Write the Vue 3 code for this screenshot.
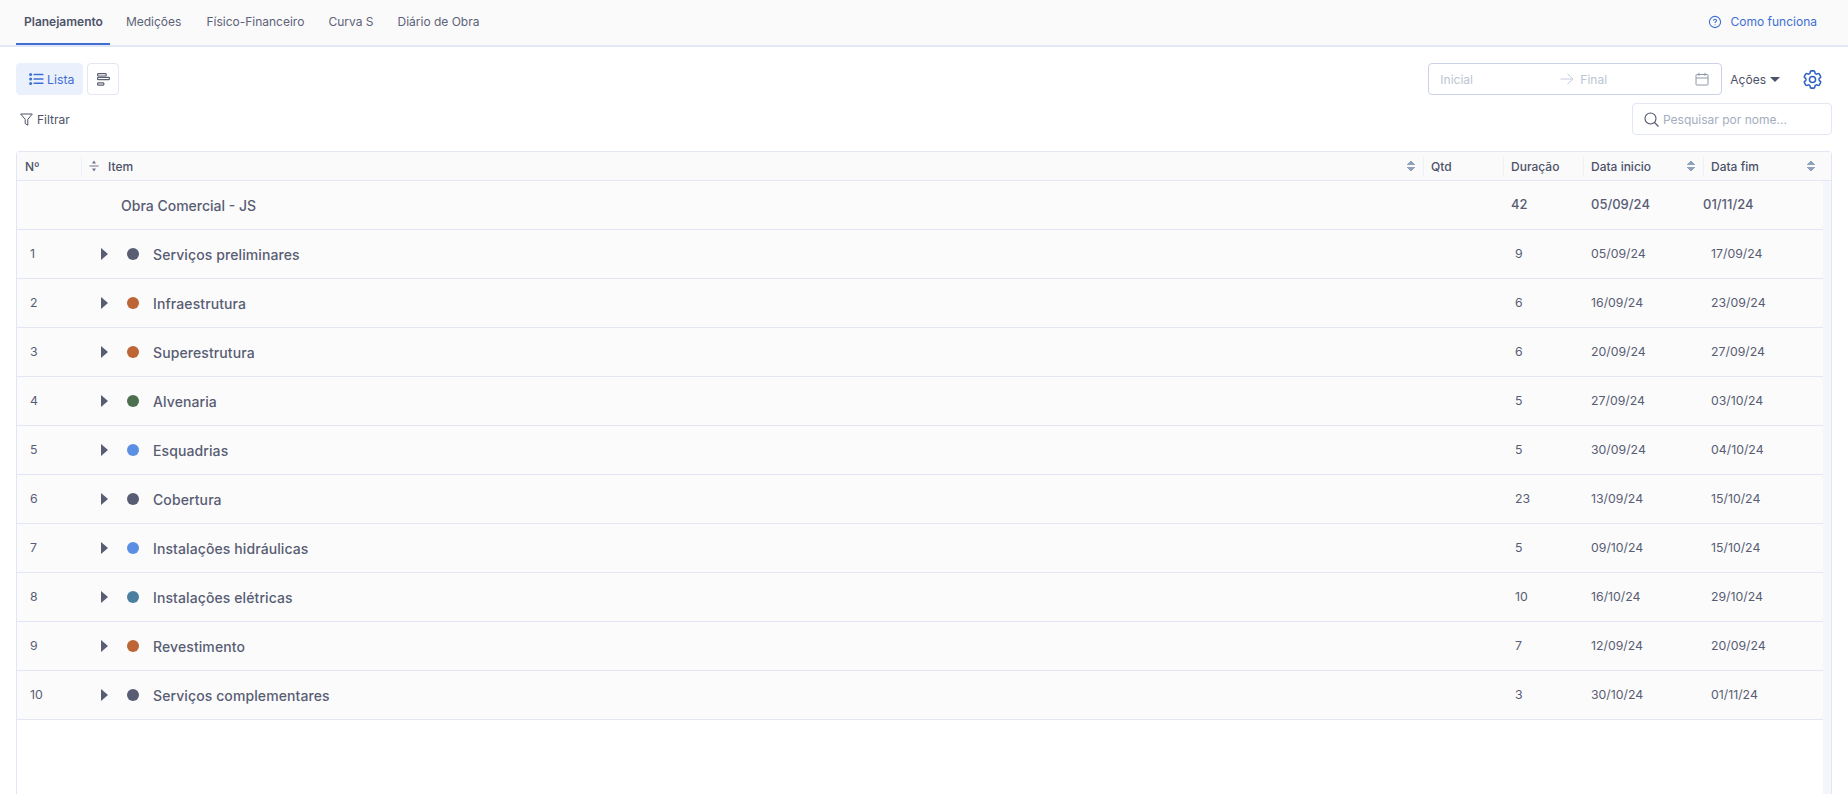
<template>
  <div class="page">
    <header class="topbar">
      <nav class="tabs">
        <a v-for="(tab, i) in tabs" :key="tab" :class="['tab', i === 0 ? 'active' : '']">{{ tab }}</a>
      </nav>
      <a class="help">
        <svg width="14" height="14" viewBox="0 0 14 14" fill="none" stroke="#3f6fd1" stroke-width="1.1">
          <circle cx="7" cy="7" r="5.6" />
          <path d="M5.5 5.7c0-.9.7-1.4 1.5-1.4s1.5.6 1.5 1.3c0 1.2-1.5 1.2-1.5 2.4" />
          <path d="M7 9.4v.8" />
        </svg>
        Como funciona
      </a>
    </header>

    <section class="toolbar">
      <div class="views">
        <button class="view on">
          <svg width="15" height="12" viewBox="0 0 15 12" fill="#3f6fd1">
            <circle cx="1.6" cy="1.6" r="1.5" />
            <circle cx="1.6" cy="6" r="1.5" />
            <circle cx="1.6" cy="10.4" r="1.5" />
            <rect x="4.5" y="0.8" width="10" height="1.5" rx=".5" />
            <rect x="4.5" y="5.2" width="10" height="1.5" rx=".5" />
            <rect x="4.5" y="9.6" width="10" height="1.5" rx=".5" />
          </svg>
          Lista
        </button>
        <button class="view">
          <svg width="13" height="13" viewBox="0 0 13 13" fill="none" stroke="#5a5f73" stroke-width="1.2">
            <rect x=".6" y=".6" width="8.6" height="2.4" rx=".8" />
            <rect x=".6" y="4.3" width="11.8" height="2.4" rx=".8" />
            <rect x=".6" y="9.8" width="6.2" height="2.4" rx=".8" />
          </svg>
        </button>
      </div>
      <div class="actions">
        <div class="range">
          <span class="ph start">Inicial</span>
          <svg width="14" height="12" viewBox="0 0 14 12" fill="none" stroke="#c5cbdb" stroke-width="1">
            <path d="M.5 6h12.5M7.5.8 13 6l-5.500 5.200" />
          </svg>
          <span class="ph end">Final</span>
          <svg width="14" height="14" viewBox="0 0 14 14" fill="none" stroke="#8f96a8" stroke-width="1">
            <rect x="1" y="2.500" width="12" height="10.500" rx=".8" />
            <path d="M1 6h12M4 .8v3M10 .8v3" />
          </svg>
        </div>
        <button class="menu">Ações <i class="caret"></i></button>
        <svg class="gear" width="23" height="23" viewBox="0 0 24 24" fill="none" stroke="#2f62c4" stroke-width="1.6" stroke-linejoin="round">
          <path d="M9.594 3.94c.09-.542.56-.94 1.11-.94h2.593c.55 0 1.02.398 1.11.94l.213 1.281c.063.374.313.686.645.87.074.04.147.083.22.127.325.196.72.257 1.075.124l1.217-.456a1.125 1.125 0 0 1 1.37.49l1.296 2.247a1.125 1.125 0 0 1-.26 1.431l-1.003.827c-.293.241-.438.613-.43.992a7.723 7.723 0 0 1 0 .255c-.008.378.137.75.43.991l1.004.827c.424.35.534.955.26 1.43l-1.298 2.247a1.125 1.125 0 0 1-1.369.491l-1.217-.456c-.355-.133-.75-.072-1.076.124a6.47 6.47 0 0 1-.22.128c-.331.183-.581.495-.644.869l-.213 1.281c-.09.543-.56.94-1.11.94h-2.594c-.55 0-1.019-.398-1.11-.94l-.213-1.281c-.062-.374-.312-.686-.644-.87a6.52 6.52 0 0 1-.22-.127c-.325-.196-.72-.257-1.076-.124l-1.217.456a1.125 1.125 0 0 1-1.369-.49l-1.297-2.247a1.125 1.125 0 0 1 .26-1.431l1.004-.827c.292-.24.437-.613.43-.991a6.932 6.932 0 0 1 0-.255c.007-.38-.138-.751-.43-.992l-1.004-.827a1.125 1.125 0 0 1-.26-1.43l1.297-2.247a1.125 1.125 0 0 1 1.37-.491l1.216.456c.356.133.751.072 1.076-.124.072-.044.146-.086.22-.128.332-.183.582-.495.644-.869l.214-1.28Z" />
          <circle cx="12" cy="12" r="3.200" />
        </svg>
      </div>
    </section>

    <section class="filters">
      <button class="filter">
        <svg width="13" height="13" viewBox="0 0 13 13" fill="none" stroke="#4d5268" stroke-width="1" stroke-linejoin="round">
          <path d="M.7 1h11.600L7.800 6.400v5.800L5.200 10.600V6.400Z" />
        </svg>
        Filtrar
      </button>
      <div class="search">
        <svg width="15" height="15" viewBox="0 0 15 15" fill="none" stroke="#4d5268" stroke-width="1.100">
          <circle cx="6.500" cy="6.500" r="5.500" />
          <path d="m10.500 10.500 4 4" />
        </svg>
        <span class="ph">Pesquisar por nome...</span>
      </div>
    </section>

    <section class="table">
      <div class="thead">
        <div class="th c-n">Nº</div>
        <div class="th c-item sep">
          <svg class="split" width="10" height="12" viewBox="0 0 10 12" fill="#6f7488">
            <path d="M5 .5 7 3.500H3ZM.5 5.500h9v1h-9ZM3 8.500h4l-2 3Z" />
          </svg>
          Item
          <i class="sort"></i>
        </div>
        <div class="th c-qtd sep">Qtd</div>
        <div class="th c-dur sep">Duração</div>
        <div class="th c-ini sep">Data inicio<i class="sort"></i></div>
        <div class="th c-fim sep">Data fim<i class="sort"></i></div>
      </div>
      <div class="body">
        <div class="rows">
          <div class="row root">
            <div class="c-n"></div>
            <div class="c-item">Obra Comercial - JS</div>
            <div class="c-qtd"></div>
            <div class="c-dur">42</div>
            <div class="c-ini">05/09/24</div>
            <div class="c-fim">01/11/24</div>
          </div>
          <div v-for="(row, i) in rows" :key="row.name" class="row">
            <div class="c-n">{{ i + 1 }}</div>
            <div class="c-item">
              <i class="arrow"></i>
              <i class="dot" :style="{ background: row.color }"></i>
              <span>{{ row.name }}</span>
            </div>
            <div class="c-qtd"></div>
            <div class="c-dur">{{ row.days }}</div>
            <div class="c-ini">{{ row.start }}</div>
            <div class="c-fim">{{ row.end }}</div>
          </div>
        </div>
        <div class="scroll"></div>
      </div>
    </section>
  </div>
</template>

<script setup>
const tabs = ["Planejamento", "Medições", "Físico-Financeiro", "Curva S", "Diário de Obra"];

const gray = "#585d73";
const orange = "#bd6535";
const green = "#4b7050";
const blue = "#5b8fe3";
const teal = "#4a7f9f";

const rows = [
  { name: "Serviços preliminares", color: gray, days: 9, start: "05/09/24", end: "17/09/24" },
  { name: "Infraestrutura", color: orange, days: 6, start: "16/09/24", end: "23/09/24" },
  { name: "Superestrutura", color: orange, days: 6, start: "20/09/24", end: "27/09/24" },
  { name: "Alvenaria", color: green, days: 5, start: "27/09/24", end: "03/10/24" },
  { name: "Esquadrias", color: blue, days: 5, start: "30/09/24", end: "04/10/24" },
  { name: "Cobertura", color: gray, days: 23, start: "13/09/24", end: "15/10/24" },
  { name: "Instalações hidráulicas", color: blue, days: 5, start: "09/10/24", end: "15/10/24" },
  { name: "Instalações elétricas", color: teal, days: 10, start: "16/10/24", end: "29/10/24" },
  { name: "Revestimento", color: orange, days: 7, start: "12/09/24", end: "20/09/24" },
  { name: "Serviços complementares", color: gray, days: 3, start: "30/10/24", end: "01/11/24" },
];
</script>

<style>
html,
body {
  background: #fff;
  overflow: hidden;
}
</style>

<style scoped>
.page {
  height: 794px;
  display: flex;
  flex-direction: column;
  overflow: hidden;
  font-family: Inter, "Liberation Sans", sans-serif;
  font-size: 12px;
  color: #4d5268;
}
button {
  font: inherit;
  color: inherit;
  background: none;
  border: 0;
  padding: 0;
}
i {
  display: block;
  flex: none;
}

/* topo */
.topbar {
  height: 47px;
  box-sizing: border-box;
  flex: none;
  display: flex;
  justify-content: space-between;
  padding: 0 16px;
  background: #fafafb;
  border-bottom: 2px solid #e3e6f5;
}
.tabs {
  display: flex;
  gap: 8px;
}
.tab {
  height: 45px;
  box-sizing: border-box;
  padding: 0 8px;
  line-height: 43px;
  color: #5d6276;
  border-bottom: 2px solid transparent;
}
.tab:nth-child(2) {
  margin-right: 1px;
}
.tab.active {
  padding-right: 7px;
  color: #4d5268;
  font-weight: 600;
  border-bottom-color: #3f6fd1;
}
.help {
  display: flex;
  align-items: center;
  gap: 9px;
  height: 42px;
  padding-right: 15px;
  color: #3f6fd1;
}
.help svg {
  margin-top: 2px;
}

/* barra de acoes */
.toolbar {
  flex: none;
  display: flex;
  justify-content: space-between;
  padding: 16px 16px 0;
}
.views {
  display: flex;
  gap: 4px;
}
.view {
  height: 32px;
  min-width: 32px;
  box-sizing: border-box;
  display: flex;
  align-items: center;
  justify-content: center;
  border: 1px solid #e3e6f5;
  border-radius: 4px;
  background: #fff;
}
.view.on {
  width: 67px;
  justify-content: flex-start;
  padding-left: 12px;
  gap: 3px;
  font-size: 12.3px;
  color: #3f6fd1;
  background: #eaf0fc;
  border-color: #eaf0fc;
}
.actions {
  display: flex;
  align-items: center;
}
.range {
  width: 294px;
  height: 32px;
  box-sizing: border-box;
  display: flex;
  align-items: center;
  padding: 0 12px 0 11px;
  border: 1px solid #ccd2e6;
  border-radius: 4px;
}
.ph {
  color: #a3aec0;
}
.range .ph {
  color: #bcc5d3;
}
.start {
  width: 120px;
}
.end {
  flex: 1;
  margin-left: 6px;
}
.menu {
  display: flex;
  align-items: center;
  gap: 4px;
  margin-left: 8px;
}
.caret {
  width: 0;
  height: 0;
  border-left: 5px solid transparent;
  border-right: 5px solid transparent;
  border-top: 5px solid #4d5268;
}
.gear {
  margin: 0 8px 0 21px;
}

.filters {
  flex: none;
  height: 32px;
  display: flex;
  justify-content: space-between;
  padding: 8px 16px 0;
}
.filter {
  display: flex;
  align-items: center;
  gap: 4px;
  height: 32px;
  padding-left: 4px;
}
.search {
  width: 200px;
  height: 32px;
  box-sizing: border-box;
  display: flex;
  align-items: center;
  gap: 4px;
  padding: 0 11px;
  border: 1px solid #e3e6f5;
  border-radius: 4px;
}

/* tabela */
.table {
  flex: 1;
  margin: 16px 16px 0;
  border: 1px solid #e3e6f5;
  border-bottom: 0;
  border-radius: 4px 4px 0 0;
  display: flex;
  flex-direction: column;
  min-height: 0;
}
.thead {
  flex: none;
  height: 28px;
  display: flex;
  align-items: center;
  padding-right: 8px;
  background: #fafafb;
  border-bottom: 1px solid #e3e6f5;
  font-weight: 500;
}
.c-n {
  flex: none;
  width: 64px;
  box-sizing: border-box;
}
.c-item {
  flex: 1;
  min-width: 0;
  box-sizing: border-box;
  display: flex;
  align-items: center;
}
.c-qtd,
.c-dur {
  flex: none;
  width: 80px;
  box-sizing: border-box;
}
.c-ini,
.c-fim {
  flex: none;
  width: 120px;
  box-sizing: border-box;
}
.th {
  height: 19px;
  display: flex;
  align-items: center;
  padding-left: 7px;
  padding-right: 8px;
}
.th.c-n {
  padding-left: 8px;
}
.th.c-dur {
  padding-right: 0;
}
.sep {
  border-left: 1px solid #eef0f8;
}
.split {
  margin-right: 9px;
}
.sort {
  margin-left: auto;
  width: 8px;
  height: 12px;
  background:
    linear-gradient(to bottom right, transparent 50%, #8fa3bd 51%) 0 0 / 4px 5px no-repeat,
    linear-gradient(to bottom left, transparent 50%, #8fa3bd 51%) 4px 0 / 4px 5px no-repeat,
    linear-gradient(to top right, transparent 50%, #8fa3bd 51%) 0 7px / 4px 5px no-repeat,
    linear-gradient(to top left, transparent 50%, #8fa3bd 51%) 4px 7px / 4px 5px no-repeat;
}
.body {
  flex: 1;
  display: flex;
  min-height: 0;
}
.rows {
  flex: 1;
  min-width: 0;
}
.scroll {
  flex: none;
  width: 8px;
  background: #f5f6fc;
}
.row {
  height: 49px;
  box-sizing: border-box;
  display: flex;
  align-items: center;
  background: #fbfbfc;
  border-bottom: 1px solid #e3e6f5;
  color: #585d73;
  font-size: 12.3px;
}
.row > div:not(.c-item) {
  padding-bottom: 2px;
}
.row .c-n {
  padding-left: 13px;
}
.row .c-item {
  padding-left: 20px;
  font-size: 14px;
  letter-spacing: .1px;
  font-weight: 500;
}
.row .c-dur {
  padding-left: 12px;
}
.row .c-ini,
.row .c-fim {
  padding-left: 8px;
}
.row.root {
  font-size: 13px;
  font-weight: 500;
}
.row.root .c-item {
  padding-left: 40px;
  letter-spacing: 0;
}
.row.root .c-dur {
  padding-left: 8px;
}
.row.root .c-fim {
  padding-left: 0;
}
.arrow {
  width: 0;
  height: 0;
  border-top: 6px solid transparent;
  border-bottom: 6px solid transparent;
  border-left: 7px solid #585d73;
}
.dot {
  width: 12px;
  height: 12px;
  border-radius: 50%;
  margin: 0 14px 0 19px;
}
</style>
